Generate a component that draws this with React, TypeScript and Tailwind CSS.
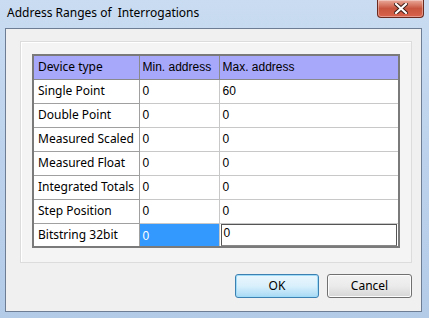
import React from "react";

const rows: [string, string, string][] = [
  ["Single Point", "0", "60"],
  ["Double Point", "0", "0"],
  ["Measured Scaled", "0", "0"],
  ["Measured Float", "0", "0"],
  ["Integrated Totals", "0", "0"],
  ["Step Position", "0", "0"],
];

export default function App() {
  return (
    <div className="w-[429px] h-[318px] relative overflow-hidden bg-gradient-to-b from-[#c9dcf1] via-[#bcd2ec] to-[#b4cbe8] flex flex-col" style={{ fontFamily: "'Noto Sans', sans-serif" }}>
      {/* title bar */}
      <div className="h-[28px] flex items-start relative shrink-0">
        <div className="pl-[7px] pt-[4px] text-[12px] text-black leading-[18px]">Address Ranges of&nbsp; Interrogations</div>
        <div className="absolute left-[377px] top-0 w-[47px] h-[18px] rounded-b-[4px] border border-t-0 border-[#6b2a20] bg-gradient-to-b from-[#e9a99a] via-[#c8553f] to-[#d9624b] flex items-center justify-center shadow-[inset_0_0_0_1px_rgba(255,255,255,0.35)]">
          <svg width="14" height="11" viewBox="0 0 14 11">
            <path d="M2 1 L12 10 M12 1 L2 10" stroke="#3a1a14" strokeWidth="4" strokeLinecap="square" />
            <path d="M2 1 L12 10 M12 1 L2 10" stroke="#ffffff" strokeWidth="2.2" strokeLinecap="square" />
          </svg>
        </div>
      </div>
      {/* client area */}
      <div className="ml-[5px] mr-[7px] mb-[6px] flex-1 border border-[#6d7d93] bg-[#f0f0f0] flex flex-col">
        <div className="mt-[12px] ml-[14px] mr-[9px] h-[222px] border border-[#dcdcdc] bg-[#f4f4f4] shadow-[inset_1px_1px_0_#ffffff] pt-[12px] pl-[11px]">
          <table className="border-collapse border-2 border-[#7a7a7a] text-[12px] text-black table-fixed" style={{ fontFamily: "'Liberation Sans', Arial, sans-serif" }}>
            <tbody>
              <tr className="h-[24px] bg-[#a8a8fa]">
                <td className="w-[106px] border border-[#8a8a8a] pl-[4px] p-0" style={{ fontFamily: "'Noto Sans', sans-serif" }}>Device type</td>
                <td className="w-[80px] border border-[#8a8a8a] pl-[3px] p-0">Min. address</td>
                <td className="w-[180px] border border-[#8a8a8a] pl-[3px] p-0">Max. address</td>
              </tr>
              {rows.map((r) => (
                <tr key={r[0]} className="h-[24px] bg-white">
                  <td className="border border-[#a0a0a0] pl-[4px] p-0 whitespace-nowrap" style={{ fontFamily: "'Noto Sans', sans-serif" }}>{r[0]}</td>
                  <td className="border border-[#c8c8c8] pl-[3px] p-0">{r[1]}</td>
                  <td className="border border-[#c8c8c8] pl-[3px] p-0">{r[2]}</td>
                </tr>
              ))}
              <tr className="h-[24px] bg-white">
                <td className="border border-[#a0a0a0] pl-[4px] p-0" style={{ fontFamily: "'Noto Sans', sans-serif" }}>Bitstring 32bit</td>
                <td className="border border-[#c8c8c8] bg-[#3399ff] text-white pl-[3px] p-0 pt-[2px]">0</td>
                <td className="p-0 border border-[#c8c8c8]">
                  <div className="mx-[1px] h-[22px] border border-[#555] border-b-[#888] pl-[2px] leading-[16px]">0</div>
                </td>
              </tr>
            </tbody>
          </table>
        </div>
        <div className="flex justify-end gap-[8px] mt-[11px] mr-[9px]">
          <button className="w-[84px] h-[24px] rounded-[3px] border border-[#3c7fb1] bg-gradient-to-b from-[#eaf6fd] via-[#d9f0fc] to-[#a7d9f5] shadow-[inset_0_0_0_1px_#a0dcf8] text-[12px] text-black">OK</button>
          <button className="w-[85px] h-[24px] rounded-[3px] border border-[#707070] bg-gradient-to-b from-[#f2f2f2] via-[#ebebeb] to-[#d6d6d6] shadow-[inset_0_0_0_1px_#fcfcfc] text-[12px] text-black">Cancel</button>
        </div>
      </div>
    </div>
  );
}
